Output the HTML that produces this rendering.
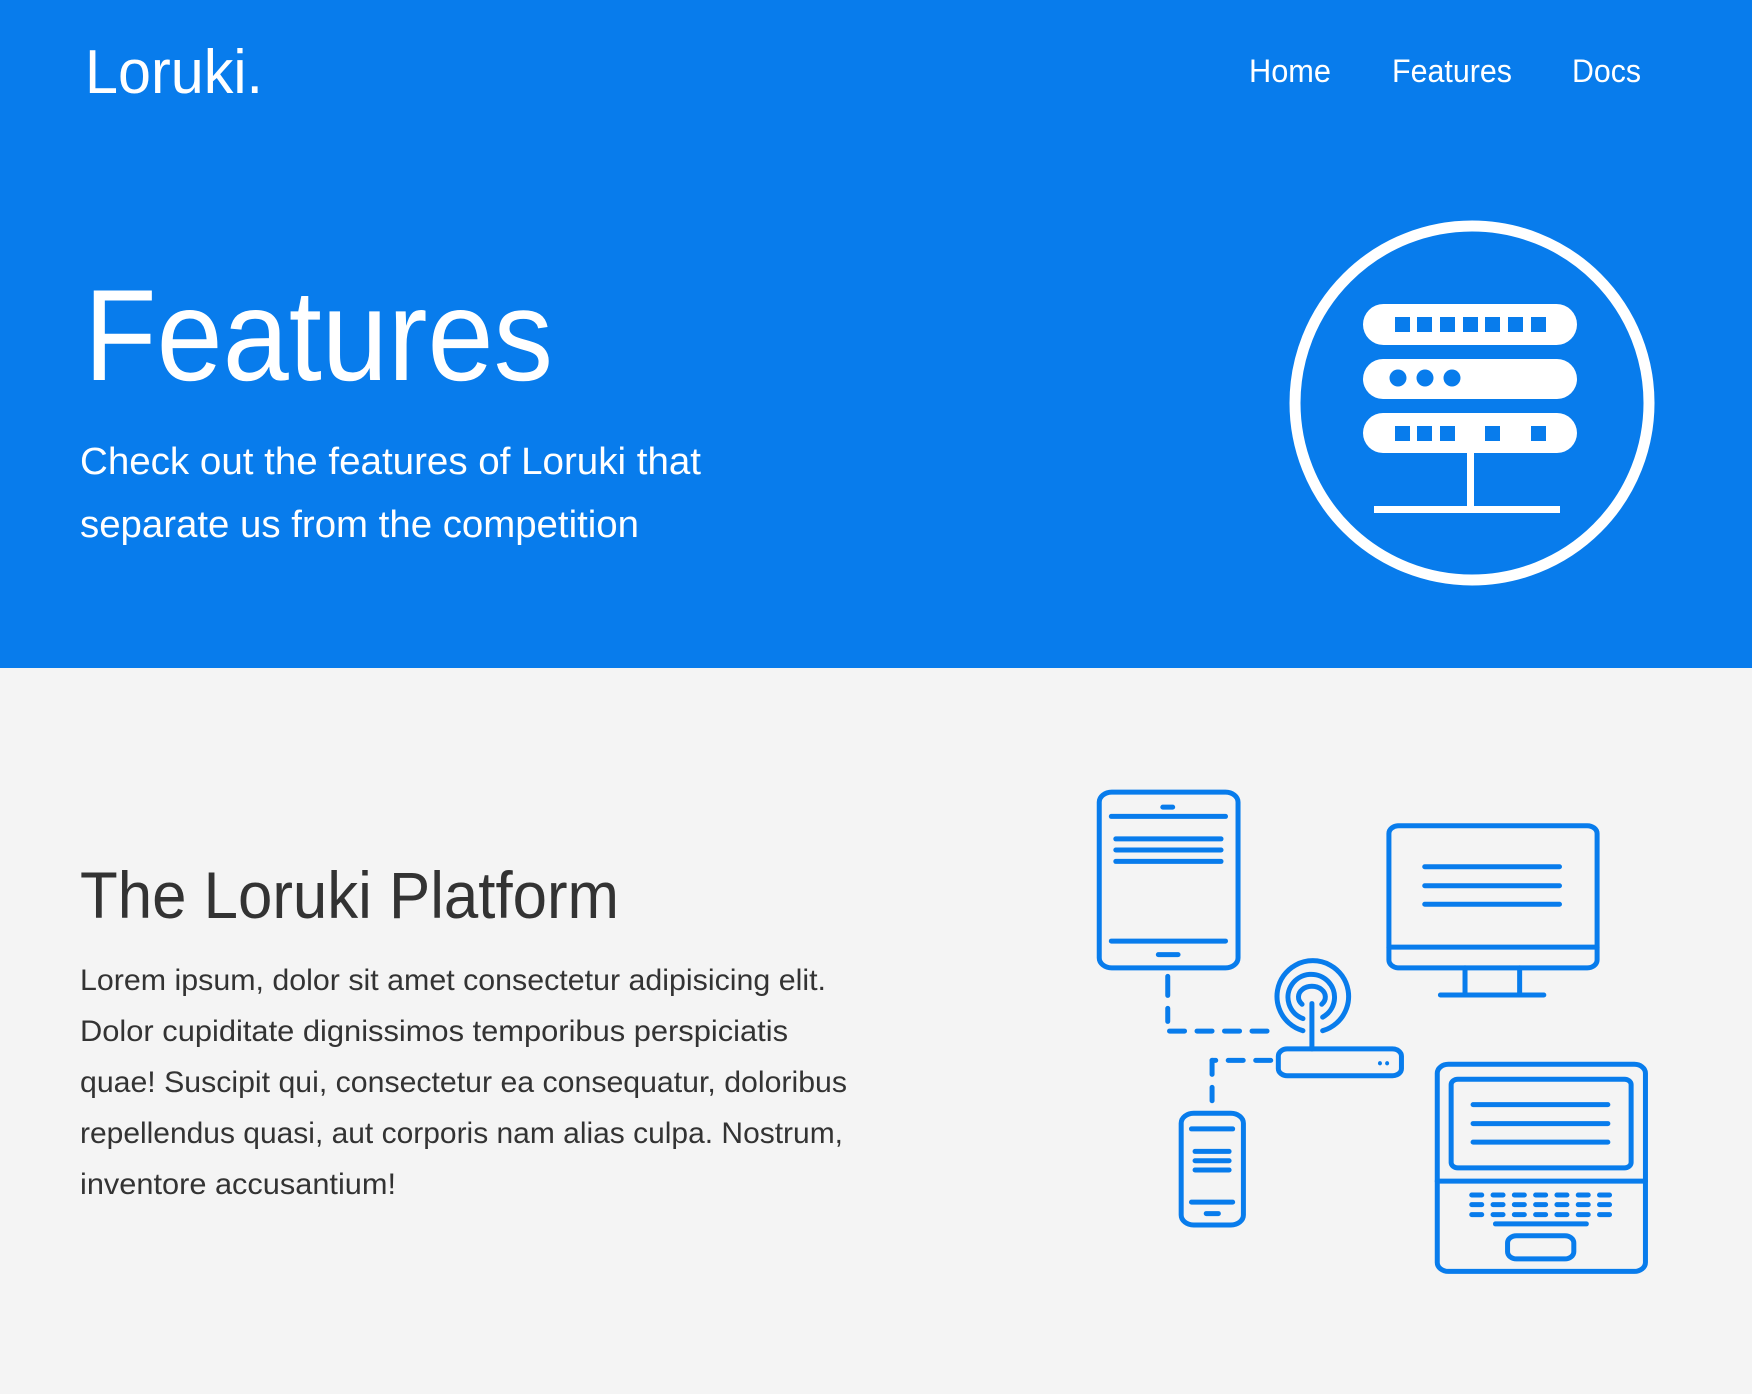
<!DOCTYPE html>
<html><head><meta charset="utf-8"><style>
html,body{margin:0;padding:0;width:1752px;height:1394px;overflow:hidden;background:#f4f4f4}
svg{display:block}
text{font-family:"Liberation Sans",sans-serif}
</style></head><body>
<svg width="1752" height="1394" viewBox="0 0 1752 1394" xmlns="http://www.w3.org/2000/svg">
<rect x="0" y="0" width="1752" height="668" fill="#087cec"/>
<rect x="0" y="668" width="1752" height="726" fill="#f4f4f4"/>
<g fill="#fff">
<text x="85" y="93" font-size="62" textLength="178" lengthAdjust="spacingAndGlyphs">Loruki.</text>
<text x="1249" y="82" font-size="32" textLength="82" lengthAdjust="spacingAndGlyphs">Home</text>
<text x="1392" y="82" font-size="32" textLength="120" lengthAdjust="spacingAndGlyphs">Features</text>
<text x="1572" y="82" font-size="32" textLength="69" lengthAdjust="spacingAndGlyphs">Docs</text>
<text x="84" y="380" font-size="130" textLength="469" lengthAdjust="spacingAndGlyphs">Features</text>
<text x="80" y="474" font-size="38" textLength="621" lengthAdjust="spacingAndGlyphs">Check out the features of Loruki that</text>
<text x="80" y="537" font-size="38" textLength="559" lengthAdjust="spacingAndGlyphs">separate us from the competition</text>
</g>
<circle cx="1472" cy="403" r="177" fill="none" stroke="#fff" stroke-width="11"/>
<g fill="#fff">
<rect x="1363" y="304" width="214" height="41" rx="20.5"/>
<rect x="1363" y="359" width="214" height="40" rx="20"/>
<rect x="1363" y="413" width="214" height="40" rx="20"/>
<rect x="1467" y="453" width="7" height="56"/>
<rect x="1374" y="506" width="186" height="7"/>
</g>
<g fill="#087cec">
<rect x="1395" y="317" width="15" height="15"/><rect x="1417" y="317" width="15" height="15"/><rect x="1440" y="317" width="15" height="15"/><rect x="1463" y="317" width="15" height="15"/><rect x="1485" y="317" width="15" height="15"/><rect x="1508" y="317" width="15" height="15"/><rect x="1531" y="317" width="15" height="15"/>
<circle cx="1398" cy="378" r="8.5"/><circle cx="1425" cy="378" r="8.5"/><circle cx="1452" cy="378" r="8.5"/>
<rect x="1395" y="426" width="15" height="15"/><rect x="1417" y="426" width="15" height="15"/><rect x="1440" y="426" width="15" height="15"/><rect x="1485" y="426" width="15" height="15"/><rect x="1531" y="426" width="15" height="15"/>
</g>
<g fill="#333">
<text x="80" y="918" font-size="66" textLength="539" lengthAdjust="spacingAndGlyphs">The Loruki Platform</text>
<text x="80" y="990" font-size="30" textLength="746" lengthAdjust="spacingAndGlyphs">Lorem ipsum, dolor sit amet consectetur adipisicing elit.</text>
<text x="80" y="1041" font-size="30" textLength="708" lengthAdjust="spacingAndGlyphs">Dolor cupiditate dignissimos temporibus perspiciatis</text>
<text x="80" y="1092" font-size="30" textLength="767" lengthAdjust="spacingAndGlyphs">quae! Suscipit qui, consectetur ea consequatur, doloribus</text>
<text x="80" y="1143" font-size="30" textLength="763" lengthAdjust="spacingAndGlyphs">repellendus quasi, aut corporis nam alias culpa. Nostrum,</text>
<text x="80" y="1194" font-size="30" textLength="316" lengthAdjust="spacingAndGlyphs">inventore accusantium!</text>
</g>
<svg x="1050" y="750" width="702" height="560" viewBox="0 0 1568 1568" preserveAspectRatio="none">
<g fill="none" stroke="#087cec" stroke-width="5" stroke-linecap="round">
<g vector-effect="non-scaling-stroke">
<rect vector-effect="non-scaling-stroke" x="110" y="118" width="310" height="492" rx="28"/>
<line vector-effect="non-scaling-stroke" x1="252" y1="160" x2="274" y2="160"/>
<line vector-effect="non-scaling-stroke" x1="137" y1="186" x2="392" y2="186"/>
<line vector-effect="non-scaling-stroke" x1="147" y1="249" x2="382" y2="249"/><line vector-effect="non-scaling-stroke" x1="147" y1="280" x2="382" y2="280"/><line vector-effect="non-scaling-stroke" x1="147" y1="312" x2="382" y2="312"/>
<line vector-effect="non-scaling-stroke" x1="137" y1="535" x2="392" y2="535"/>
<line vector-effect="non-scaling-stroke" x1="242" y1="573" x2="286" y2="573"/>
<rect vector-effect="non-scaling-stroke" x="757" y="212" width="465" height="398" rx="22"/>
<line vector-effect="non-scaling-stroke" x1="757" y1="552" x2="1222" y2="552"/>
<line vector-effect="non-scaling-stroke" x1="837" y1="327" x2="1138" y2="327"/><line vector-effect="non-scaling-stroke" x1="837" y1="380" x2="1138" y2="380"/><line vector-effect="non-scaling-stroke" x1="837" y1="432" x2="1138" y2="432"/>
<line vector-effect="non-scaling-stroke" x1="927" y1="610" x2="927" y2="686"/><line vector-effect="non-scaling-stroke" x1="1049" y1="610" x2="1049" y2="686"/>
<line vector-effect="non-scaling-stroke" x1="872" y1="686" x2="1103" y2="686"/>
<rect vector-effect="non-scaling-stroke" x="510" y="837" width="275" height="75" rx="20"/>
<line vector-effect="non-scaling-stroke" x1="585" y1="710" x2="585" y2="837"/>
<path vector-effect="non-scaling-stroke" d="M563 712 A30 30 0 1 1 607 712"/>
<path vector-effect="non-scaling-stroke" d="M565 752 A52 64 0 1 1 609 748"/>
<path vector-effect="non-scaling-stroke" d="M565 786 A80 100 0 1 1 609 786"/>
<line vector-effect="non-scaling-stroke" x1="263" y1="634" x2="263" y2="760" stroke-dasharray="19 13"/>
<line vector-effect="non-scaling-stroke" x1="267" y1="787" x2="487" y2="787" stroke-dasharray="15 12.5"/>
<line vector-effect="non-scaling-stroke" x1="493" y1="869" x2="362" y2="869" stroke-dasharray="15 12.5"/>
<line vector-effect="non-scaling-stroke" x1="362" y1="869" x2="362" y2="982" stroke-dasharray="14 13"/>
<rect vector-effect="non-scaling-stroke" x="293" y="1017" width="139" height="313" rx="28"/>
<line vector-effect="non-scaling-stroke" x1="316" y1="1061" x2="408" y2="1061"/>
<line vector-effect="non-scaling-stroke" x1="324" y1="1124" x2="400" y2="1124"/><line vector-effect="non-scaling-stroke" x1="324" y1="1150" x2="400" y2="1150"/><line vector-effect="non-scaling-stroke" x1="324" y1="1176" x2="400" y2="1176"/>
<line vector-effect="non-scaling-stroke" x1="316" y1="1266" x2="408" y2="1266"/>
<line vector-effect="non-scaling-stroke" x1="349" y1="1298" x2="376" y2="1298"/>
<rect vector-effect="non-scaling-stroke" x="865" y="880" width="465" height="580" rx="25"/>
<line vector-effect="non-scaling-stroke" x1="865" y1="1207" x2="1330" y2="1207"/>
<rect vector-effect="non-scaling-stroke" x="896" y="922" width="402" height="248" rx="15"/>
<line vector-effect="non-scaling-stroke" x1="945" y1="993" x2="1246" y2="993"/><line vector-effect="non-scaling-stroke" x1="945" y1="1046" x2="1246" y2="1046"/><line vector-effect="non-scaling-stroke" x1="945" y1="1098" x2="1246" y2="1098"/>
<line vector-effect="non-scaling-stroke" x1="942" y1="1246" x2="1252" y2="1246" stroke-dasharray="10 11.3"/><line vector-effect="non-scaling-stroke" x1="942" y1="1273" x2="1252" y2="1273" stroke-dasharray="10 11.3"/><line vector-effect="non-scaling-stroke" x1="942" y1="1301" x2="1252" y2="1301" stroke-dasharray="10 11.3"/>
<line vector-effect="non-scaling-stroke" x1="995" y1="1327" x2="1198" y2="1327"/>
<rect vector-effect="non-scaling-stroke" x="1022" y="1360" width="148" height="65" rx="20"/>
</g>
</g>
<ellipse cx="737" cy="877" rx="4.5" ry="6" fill="#087cec"/><ellipse cx="753" cy="877" rx="4.5" ry="6" fill="#087cec"/>
</svg>
</svg>
</body></html>
